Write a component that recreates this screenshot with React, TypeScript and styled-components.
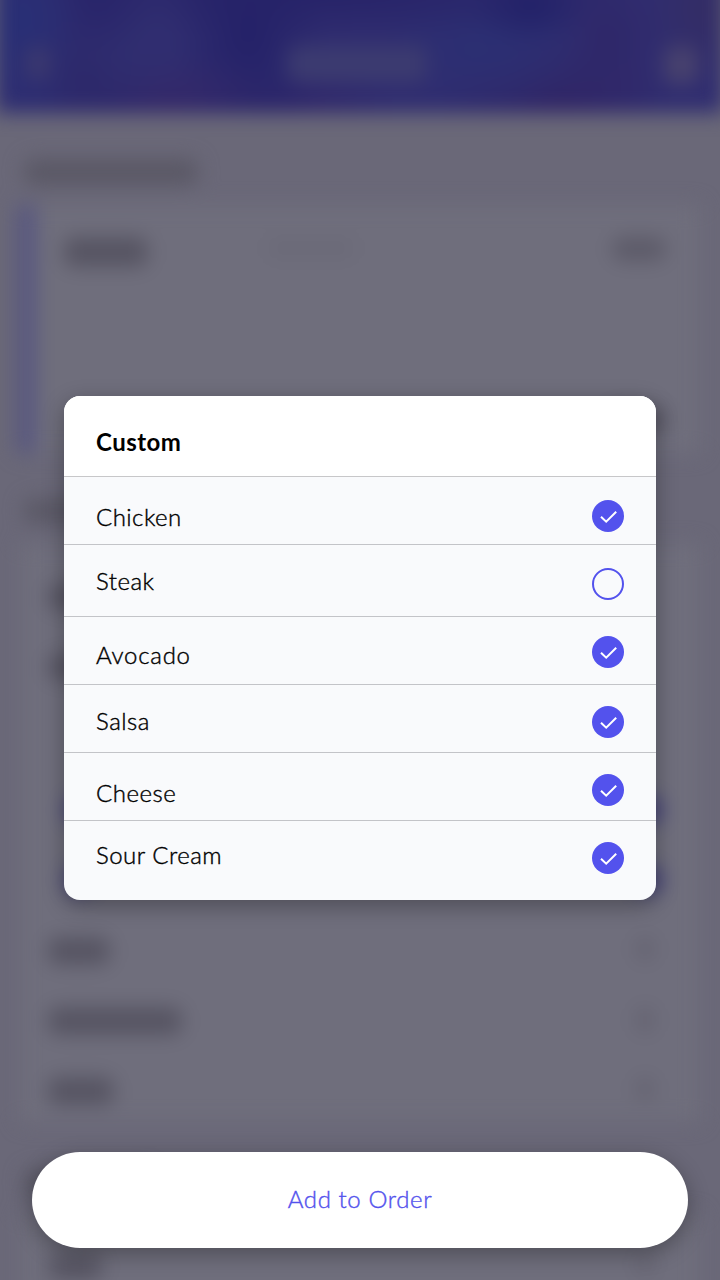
import React from "react";
import styled, { createGlobalStyle } from "styled-components";

const GlobalStyle = createGlobalStyle`
  * { box-sizing: border-box; }
  body { margin: 0; background: #6a6878; font-family: Lato, "Open Sans", sans-serif; }
  button { font: inherit; border: 0; cursor: pointer; }
`;

const Screen = styled.main`
  position: relative;
  width: 720px;
  height: 1280px;
  overflow: hidden;
  background: #6a6878;
`;

/* The order page behind the dialog, out of focus. It bleeds past the top edge. */
const Backdrop = styled.div`
  position: absolute;
  inset: -40px 0 -60px;
  display: flex;
  flex-direction: column;
  filter: blur(10px);
`;

const TopBar = styled.div`
  flex: none;
  height: 153px;
  margin: 0 -4px;
  padding: 86px 26px 0 30px;
  display: flex;
  justify-content: space-between;
  background:
    radial-gradient(ellipse 60px 110px at 26px 60px, #282f76, transparent),
    radial-gradient(ellipse 60px 60px at 102px 38px, #28246a, transparent),
    radial-gradient(ellipse 70px 60px at 140px 80px, #302e70, transparent),
    radial-gradient(ellipse 70px 70px at 94px 115px, #2c286a, transparent),
    radial-gradient(ellipse 110px 50px at 174px 142px, #342869, transparent),
    radial-gradient(ellipse 80px 130px at 252px 75px, #242168, transparent),
    radial-gradient(ellipse 100px 40px at 304px 148px, #30276a, transparent),
    radial-gradient(ellipse 300px 50px at 340px 30px, #262268, transparent),
    radial-gradient(ellipse 60px 40px at 534px 45px, #202068, transparent),
    radial-gradient(ellipse 110px 70px at 490px 85px, #2b2f73, transparent),
    radial-gradient(ellipse 120px 60px at 560px 140px, #302566, transparent),
    radial-gradient(ellipse 60px 80px at 610px 80px, #2f2769, transparent),
    radial-gradient(ellipse 60px 80px at 709px 50px, #342d65, transparent),
    #302d70;
`;

const Ink = styled.div<{ $w: number; $h?: number; $tone?: string }>`
  flex: none;
  width: ${(p) => p.$w}px;
  height: ${(p) => p.$h ?? 20}px;
  border-radius: 10px;
  background: ${(p) => p.$tone ?? "#565462"};
`;

const SectionHeading = styled.div<{ $top: number; $height: number }>`
  flex: none;
  height: ${(p) => p.$height}px;
  padding: ${(p) => p.$top}px 0 0 24px;
`;

const Summary = styled.div`
  flex: none;
  height: 248px;
  margin: 2px 20px 0 17px;
  padding: 32px 34px 22px 28px;
  display: flex;
  flex-direction: column;
  justify-content: space-between;
  background: #6f6e7c;
  border-left: 19px solid #575680;
`;

const SummaryLine = styled.div`
  display: grid;
  grid-template-columns: 202px 1fr auto;

  &:last-child { display: flex; justify-content: flex-end; }
`;

const Menu = styled.div`
  flex: none;
  height: 578px;
  margin: 0 20px;
  padding: 40px 46px 0 28px;
  background: #6f6e7c;
`;

const MenuLine = styled.div<{ $height: number; $nested?: boolean }>`
  height: ${(p) => p.$height}px;
  padding-left: ${(p) => (p.$nested ? 18 : 0)}px;
  margin-right: ${(p) => (p.$nested ? -7 : 0)}px;
  display: flex;
  justify-content: space-between;
`;

const Overlay = styled.div`
  position: relative;
  height: 100%;
  padding: 396px 32px 32px;
  display: flex;
  flex-direction: column;
  justify-content: space-between;
`;

const Dialog = styled.section`
  margin: 0 32px;
  height: 504px;
  overflow: hidden;
  border-radius: 16px;
  background: #f9fafc;
  box-shadow: 0 6px 22px rgba(0, 0, 0, 0.3);
`;

const DialogTitle = styled.h2`
  margin: 0;
  height: 81px;
  padding: 32px 32px 0;
  border-bottom: 1px solid #c7c7c9;
  background: #fff;
  color: #000;
  font-size: 24px;
  font-weight: 700;
  line-height: 28px;
  letter-spacing: 0.45px;
`;

const OptionRow = styled.div<{ $height: number }>`
  height: ${(p) => p.$height}px;
  padding: 0 32px;
  display: flex;
  align-items: flex-start;
  justify-content: space-between;

  &:not(:last-child) { border-bottom: 1px solid #c3c4c8; }
`;

const OptionLabel = styled.span<{ $top: number; $spacing: number }>`
  margin-top: ${(p) => p.$top}px;
  color: #000;
  font-size: 24px;
  font-weight: 300;
  line-height: 28px;
  letter-spacing: ${(p) => p.$spacing}px;
  -webkit-text-stroke: 0.4px currentColor;
`;

const Toggle = styled.span<{ $top: number; $on: boolean }>`
  width: 32px;
  height: 32px;
  margin-top: ${(p) => p.$top}px;
  display: grid;
  place-items: center;
  border-radius: 50%;
  border: ${(p) => (p.$on ? "0" : "2px solid #5352ed")};
  background: ${(p) => (p.$on ? "#5352ed" : "transparent")};
`;

const AddButton = styled.button`
  height: 96px;
  padding: 0 0 2px;
  border-radius: 48px;
  background: #fff;
  color: #5352ed;
  font-size: 24px;
  font-weight: 300;
  line-height: 28px;
  letter-spacing: 0.6px;
  -webkit-text-stroke: 0.4px currentColor;
  box-shadow: 0 6px 22px rgba(0, 0, 0, 0.3);
`;

type Option = {
  name: string;
  on: boolean;
  height: number;
  labelTop: number;
  toggleTop: number;
  spacing: number;
};

const options: Option[] = [
  { name: "Chicken", on: true, height: 68, labelTop: 26, toggleTop: 23, spacing: 0.45 },
  { name: "Steak", on: false, height: 72, labelTop: 22, toggleTop: 23, spacing: 0.5 },
  { name: "Avocado", on: true, height: 68, labelTop: 24, toggleTop: 19, spacing: 0.75 },
  { name: "Salsa", on: true, height: 68, labelTop: 22, toggleTop: 21, spacing: 0.5 },
  { name: "Cheese", on: true, height: 68, labelTop: 26, toggleTop: 21, spacing: 0.5 },
  { name: "Sour Cream", on: true, height: 79, labelTop: 20, toggleTop: 21, spacing: 0.5 },
];

const Check = () => (
  <svg width="32" height="32" viewBox="0 0 32 32" fill="none">
    <path d="M9 16.7 14.2 21.7 24.2 11.8" stroke="#fff" strokeWidth="2" />
  </svg>
);

export default function App() {
  return (
    <>
      <GlobalStyle />
      <Screen>
        <Backdrop aria-hidden="true">
          <TopBar>
            <Ink $w={24} $h={34} $tone="#3c396f" />
            <Ink $w={140} $h={36} $tone="#3c3b70" />
            <Ink $w={34} $h={38} $tone="#48426e" />
          </TopBar>
          <SectionHeading $top={46} $height={90}>
            <Ink $w={174} $h={26} $tone="#5a5865" />
          </SectionHeading>
          <Summary>
            <SummaryLine>
              <Ink $w={84} $h={30} />
              <Ink $w={90} $h={22} $tone="#6b6a78" />
              <Ink $w={54} $h={24} $tone="#5c5a68" />
            </SummaryLine>
            <SummaryLine>
              <Ink $w={60} $h={24} />
            </SummaryLine>
          </Summary>
          <SectionHeading $top={46} $height={91}>
            <Ink $w={150} $h={24} $tone="#5a5865" />
          </SectionHeading>
          <Menu>
            <MenuLine $height={70}><Ink $w={120} $h={26} /></MenuLine>
            <MenuLine $height={143}><Ink $w={120} $h={26} /></MenuLine>
            <MenuLine $height={70} $nested>
              <Ink $w={26} $h={26} $tone="#3c397b" />
              <Ink $w={26} $h={26} $tone="#3c397b" />
            </MenuLine>
            <MenuLine $height={70} $nested>
              <Ink $w={26} $h={26} $tone="#3c397b" />
              <Ink $w={26} $h={26} $tone="#3c397b" />
            </MenuLine>
            <MenuLine $height={70}><Ink $w={62} $h={28} /><Ink $w={18} $h={24} $tone="#646270" /></MenuLine>
            <MenuLine $height={70}><Ink $w={134} $h={28} /><Ink $w={18} $h={26} $tone="#646270" /></MenuLine>
            <MenuLine $height={40}><Ink $w={66} $h={28} /><Ink $w={18} $h={24} $tone="#646270" /></MenuLine>
          </Menu>
          <SectionHeading $top={48} $height={92}>
            <Ink $w={130} $h={24} $tone="#5a5865" />
          </SectionHeading>
          <Menu>
            <MenuLine $height={50}><Ink $w={54} $h={26} /><Ink $w={18} $tone="#646270" /></MenuLine>
          </Menu>
        </Backdrop>
        <Overlay>
          <Dialog role="dialog" aria-label="Custom">
            <DialogTitle>Custom</DialogTitle>
            {options.map((o) => (
              <OptionRow key={o.name} $height={o.height}>
                <OptionLabel $top={o.labelTop} $spacing={o.spacing}>{o.name}</OptionLabel>
                <Toggle $top={o.toggleTop} $on={o.on}>{o.on && <Check />}</Toggle>
              </OptionRow>
            ))}
          </Dialog>
          <AddButton type="button">Add to Order</AddButton>
        </Overlay>
      </Screen>
    </>
  );
}
